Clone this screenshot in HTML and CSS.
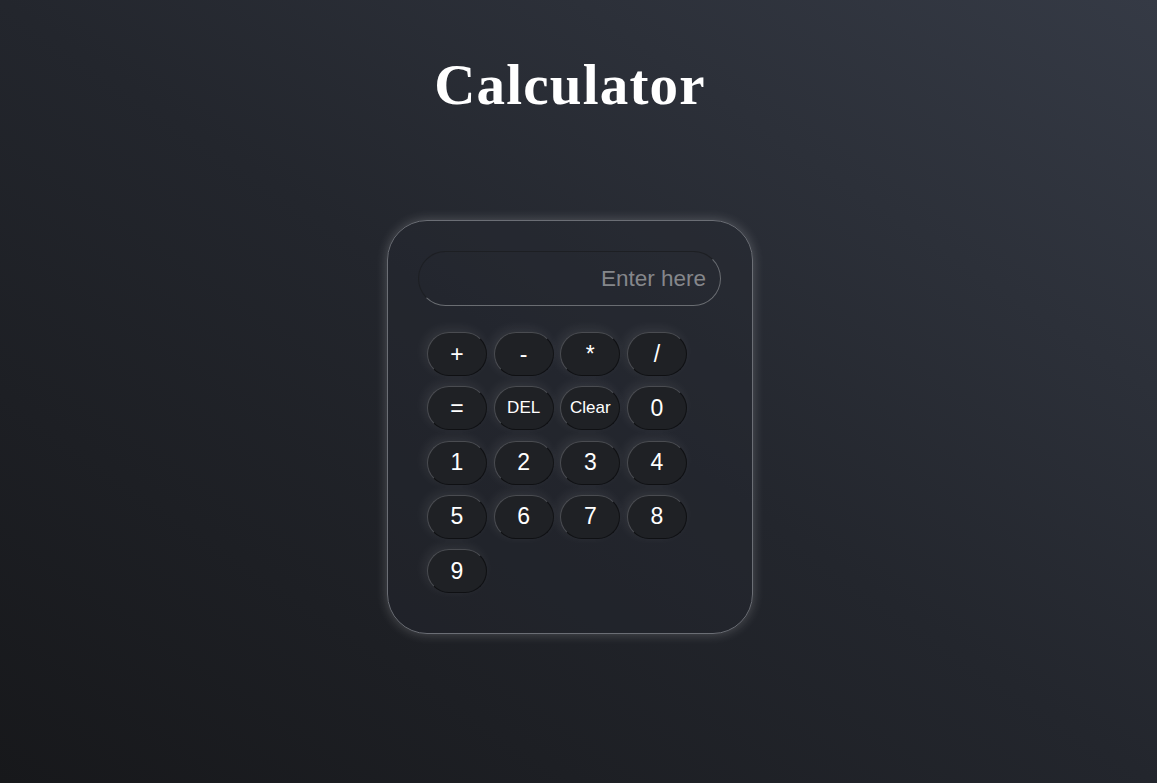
FILE: index.html
```html
<!DOCTYPE html>
<html lang="en">
<head>
<meta charset="utf-8">
<title>Calculator</title>
<link rel="stylesheet" href="styles.css">
</head>
<body>
<div class="page">
  <h1 class="title">Calculator</h1>
  <div class="calc">
    <input class="display" type="text" placeholder="Enter here">
    <div class="keys">
      <button class="key">+</button>
      <button class="key">-</button>
      <button class="key">*</button>
      <button class="key">/</button>
      <button class="key">=</button>
      <button class="key small">DEL</button>
      <button class="key small">Clear</button>
      <button class="key">0</button>
      <button class="key">1</button>
      <button class="key">2</button>
      <button class="key">3</button>
      <button class="key">4</button>
      <button class="key">5</button>
      <button class="key">6</button>
      <button class="key">7</button>
      <button class="key">8</button>
      <button class="key">9</button>
    </div>
  </div>
</div>
</body>
</html>
```

FILE: styles.css
```css
html, body {
  margin: 0;
  height: 100%;
}
body {
  background: linear-gradient(to top right, #17181b 0%, #23262d 50%, #353a45 100%);
  font-family: "Liberation Sans", Arial, sans-serif;
  overflow: hidden;
}
.page {
  width: 1140px;
  display: flex;
  flex-direction: column;
  align-items: center;
  padding-top: 55px;
}
.title {
  margin: 0;
  font-family: "Liberation Serif", "Times New Roman", serif;
  font-weight: bold;
  font-size: 57px;
  line-height: 60px;
  letter-spacing: 1.2px;
  color: #ffffff;
}
.calc {
  margin-top: 105px;
  width: 303px;
  padding: 30px 31px 40px 30px;
  border: 1px solid #6b6e75;
  border-radius: 40px;
  background: rgba(38, 41, 48, 0.35);
  box-shadow: 0 0 12px rgba(255, 255, 255, 0.22);
}
.display {
  display: block;
  box-sizing: border-box;
  width: 303px;
  height: 55px;
  padding: 0 14px 0 14px;
  border-radius: 28px;
  border: 1px solid;
  border-color: #1d1f23 #6a6d72 #6a6d72 #1d1f23;
  background: transparent;
  color: #dddddd;
  font-family: "Liberation Sans", Arial, sans-serif;
  font-size: 22.5px;
  text-align: right;
  outline: none;
}
.display::placeholder {
  color: #85878b;
}
.keys {
  margin: 26px 0 0 9px;
  display: grid;
  grid-template-columns: repeat(4, 60px);
  column-gap: 6.67px;
  row-gap: 10.25px;
}
.key {
  height: 44px;
  border-radius: 22px;
  border: 1px solid;
  border-color: #4a4c51 #0f1013 #0f1013 #4a4c51;
  background: #1f2125;
  color: #ffffff;
  font-family: "Liberation Sans", Arial, sans-serif;
  font-size: 23px;
  padding: 0;
  box-shadow: -3px -3px 12px rgba(255, 255, 255, 0.08);
}
.key.small {
  font-size: 17px;
}
```
